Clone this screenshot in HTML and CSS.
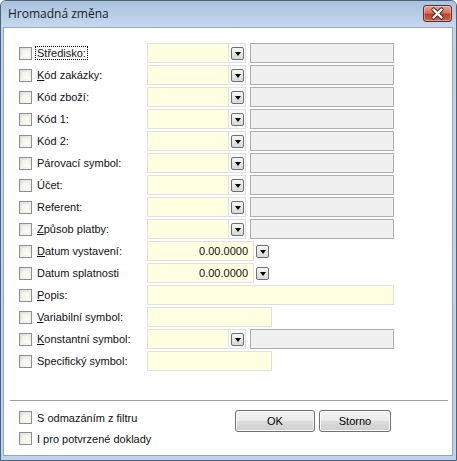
FILE: index.html
```html
<!DOCTYPE html>
<html lang="cs">
<head>
<meta charset="utf-8">
<title>Hromadná změna</title>
<link rel="stylesheet" href="styles.css">
</head>
<body>
<div class="window">
  <div class="titlebar">
    <span class="title">Hromadná změna</span>
    <div class="close">
      <svg width="29" height="17" viewBox="0 0 29 17">
        <path d="M10.5 4.5 L18.5 12.5 M18.5 4.5 L10.5 12.5" stroke="#4a231c" stroke-width="4.2" stroke-linecap="round"/>
        <path d="M10.5 4.5 L18.5 12.5 M18.5 4.5 L10.5 12.5" stroke="#ffffff" stroke-width="2.4" stroke-linecap="round"/>
      </svg>
    </div>
  </div>
  <div class="client">
    <div class="rows">
      <div class="row"><span class="cb"></span><span class="label"><span class="focus">Středisko:</span></span><div class="combo"><span class="combo-text"></span><span class="combo-side"><span class="dd"></span></span></div><div class="gray"></div></div>
      <div class="row"><span class="cb"></span><span class="label"><u>K</u>ód zakázky:</span><div class="combo"><span class="combo-text"></span><span class="combo-side"><span class="dd"></span></span></div><div class="gray"></div></div>
      <div class="row"><span class="cb"></span><span class="label">Kód zboží:</span><div class="combo"><span class="combo-text"></span><span class="combo-side"><span class="dd"></span></span></div><div class="gray"></div></div>
      <div class="row"><span class="cb"></span><span class="label">Kód 1:</span><div class="combo"><span class="combo-text"></span><span class="combo-side"><span class="dd"></span></span></div><div class="gray"></div></div>
      <div class="row"><span class="cb"></span><span class="label">Kód 2:</span><div class="combo"><span class="combo-text"></span><span class="combo-side"><span class="dd"></span></span></div><div class="gray"></div></div>
      <div class="row"><span class="cb"></span><span class="label">Párovací symbol:</span><div class="combo"><span class="combo-text"></span><span class="combo-side"><span class="dd"></span></span></div><div class="gray"></div></div>
      <div class="row"><span class="cb"></span><span class="label">Účet:</span><div class="combo"><span class="combo-text"></span><span class="combo-side"><span class="dd"></span></span></div><div class="gray"></div></div>
      <div class="row"><span class="cb"></span><span class="label">Referent:</span><div class="combo"><span class="combo-text"></span><span class="combo-side"><span class="dd"></span></span></div><div class="gray"></div></div>
      <div class="row"><span class="cb"></span><span class="label"><u>Z</u>působ platby:</span><div class="combo"><span class="combo-text"></span><span class="combo-side"><span class="dd"></span></span></div><div class="gray"></div></div>
      <div class="row"><span class="cb"></span><span class="label"><u>D</u>atum vystavení:</span><div class="date">0.00.0000</div><span class="dd dd-date"></span></div>
      <div class="row"><span class="cb"></span><span class="label">Datum splatnosti</span><div class="date">0.00.0000</div><span class="dd dd-date"></span></div>
      <div class="row"><span class="cb"></span><span class="label"><u>P</u>opis:</span><div class="edit edit-wide"></div></div>
      <div class="row"><span class="cb"></span><span class="label"><u>V</u>ariabilní symbol:</span><div class="edit edit-mid"></div></div>
      <div class="row"><span class="cb"></span><span class="label"><u>K</u>onstantní symbol:</span><div class="combo"><span class="combo-text"></span><span class="combo-side"><span class="dd"></span></span></div><div class="gray"></div></div>
      <div class="row"><span class="cb"></span><span class="label">Specifický symbol:</span><div class="edit edit-mid"></div></div>
    </div>
    <div class="sep"></div>
    <div class="footer">
      <div class="footer-checks">
        <div class="frow"><span class="cb"></span><span class="flabel">S odmazáním z filtru</span></div>
        <div class="frow"><span class="cb"></span><span class="flabel">I pro potvrzené doklady</span></div>
      </div>
      <div class="buttons">
        <button class="btn btn-ok">OK</button>
        <button class="btn btn-storno">Storno</button>
      </div>
    </div>
  </div>
</div>
</body>
</html>
```

FILE: styles.css
```css
* { box-sizing: border-box; }
html, body { margin: 0; padding: 0; }
body {
  width: 457px;
  height: 461px;
  background: #ffffff;
  font-family: "Liberation Sans", Arial, sans-serif;
  font-size: 11px;
  color: #000;
}
.window {
  width: 457px;
  height: 461px;
  border: 1px solid #4e6278;
  border-radius: 6px 6px 0 0;
  background: linear-gradient(#aec6e2 0px, #c0d5ec 28px, #bcd3ec 100%);
  display: flex;
  flex-direction: column;
}
.titlebar {
  height: 26px;
  flex: none;
  display: flex;
  align-items: flex-start;
  justify-content: space-between;
  padding: 0 4px 0 7px;
  background: linear-gradient(#a9c2df, #c5d9ef);
  border-radius: 5px 5px 0 0;
}
.title {
  font-family: "Open Sans", "Noto Sans", sans-serif;
  font-size: 12px;
  color: #1b1b1b;
  line-height: 26px;
}
.close {
  margin-top: 4px;
  width: 29px;
  height: 17px;
  border: 1px solid #6b2b1f;
  border-radius: 3px;
  background: linear-gradient(#e5a699 0%, #d37561 45%, #bf3f25 55%, #cd6a4c 100%);
  box-shadow: inset 0 0 0 1px rgba(255,255,255,0.35);
  overflow: hidden;
}
.close svg { display: block; margin: -1px 0 0 -1px; }
.client {
  flex: 1;
  margin: 0 3px 4px 2px;
  background: #ffffff;
  border: 1px solid #97a6b8;
  display: flex;
  flex-direction: column;
}
.rows {
  padding: 15px 0 0 15px;
  display: flex;
  flex-direction: column;
  gap: 2px;
}
.row {
  height: 20px;
  display: flex;
  align-items: center;
}
.cb {
  width: 13px;
  height: 13px;
  flex: none;
  border: 1px solid #8f8f8f;
  background: linear-gradient(135deg, #dedede, #fbfbf4);
  padding: 2px;
  position: relative;
}
.cb::after {
  content: "";
  display: block;
  width: 100%;
  height: 100%;
  background: linear-gradient(135deg, #f1f1e4, #fdfdf2);
}
.label {
  width: 115px;
  flex: none;
  padding-left: 5px;
  white-space: nowrap;
  color: #111;
}
.focus {
  outline: 1px dotted #000;
  outline-offset: 0;
  padding: 0 1px;
  margin-left: -1px;
}
.combo {
  width: 99px;
  height: 20px;
  flex: none;
  border: 1px solid #dfe0e6;
  display: flex;
}
.combo-text {
  width: 80px;
  background: #ffffe1;
}
.combo-side {
  flex: 1;
  border-left: 1px solid #e2e2e2;
  background: #fafafa;
  display: flex;
  align-items: center;
  padding-left: 2px;
}
.dd {
  width: 13px;
  height: 13px;
  flex: none;
  border: 1px solid #6e6e6e;
  border-radius: 2px;
  background: linear-gradient(#f6f6f6, #d8d8d8);
  position: relative;
}
.dd::after {
  content: "";
  position: absolute;
  left: 3px;
  top: 4px;
  border-left: 3px solid transparent;
  border-right: 3px solid transparent;
  border-top: 4px solid #000;
}
.dd-date { margin-left: 2px; }
.gray {
  width: 144px;
  height: 20px;
  margin-left: 4px;
  border: 1px solid #adadad;
  background: #f0f0f0;
}
.date {
  width: 107px;
  height: 20px;
  border: 1px solid #dfe0e6;
  background: #ffffe1;
  text-align: right;
  padding-right: 5px;
  line-height: 18px;
  color: #111;
}
.edit {
  height: 20px;
  border: 1px solid #dfe0e6;
  background: #ffffe1;
}
.edit-wide { width: 247px; }
.edit-mid { width: 125px; }
.sep {
  height: 1px;
  background: #a0a0a0;
  margin: 29px 4px 0 6px;
}
.footer {
  display: flex;
  padding: 9px 0 0 15px;
}
.footer-checks {
  width: 216px;
  display: flex;
  flex-direction: column;
  gap: 6px;
}
.frow {
  height: 15px;
  display: flex;
  align-items: center;
}
.flabel {
  padding-left: 5px;
  color: #111;
}
.buttons {
  display: flex;
  gap: 4px;
}
.btn {
  height: 22px;
  border: 1px solid #707070;
  border-radius: 3px;
  background: linear-gradient(#f2f2f2 0%, #ebebeb 49%, #dddddd 50%, #cfcfcf 100%);
  box-shadow: inset 0 0 0 1px #fbfbfb;
  font-family: "Liberation Sans", Arial, sans-serif;
  font-size: 11px;
  color: #000;
  padding: 0;
}
.btn-ok { width: 80px; }
.btn-storno { width: 72px; }
```
